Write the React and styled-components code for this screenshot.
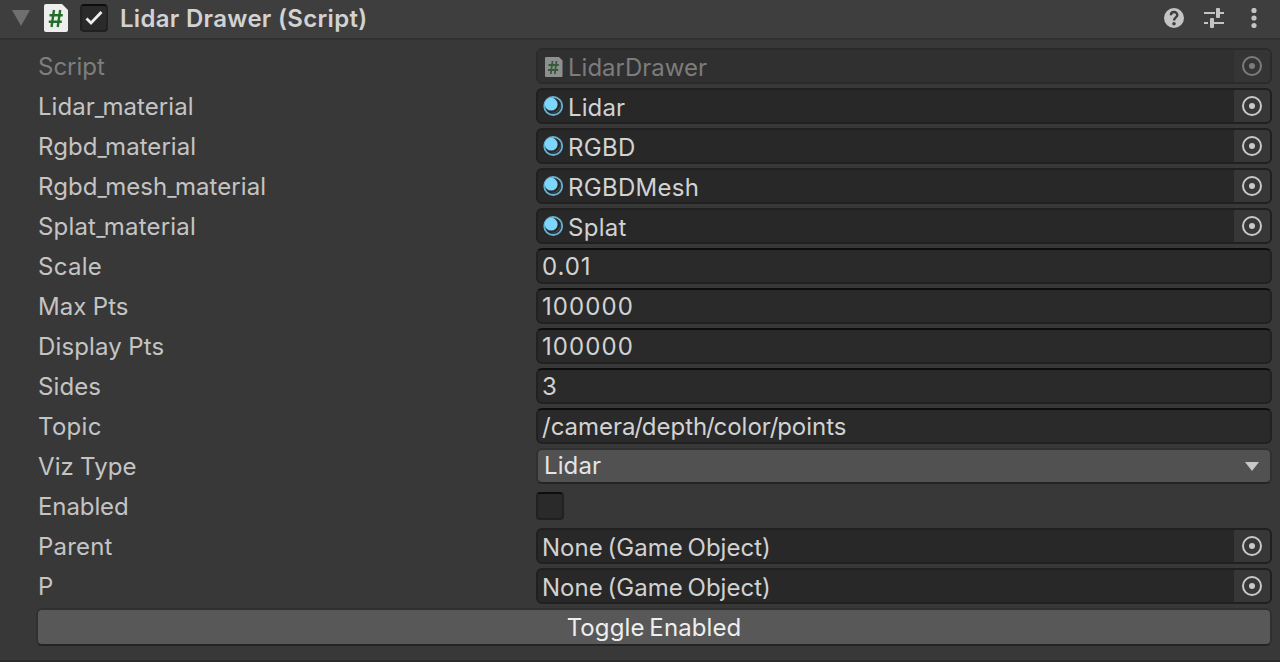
import React from "react";
import styled, { createGlobalStyle, css } from "styled-components";

const GlobalStyle = createGlobalStyle`
  *, *::before, *::after { box-sizing: border-box; }
  body {
    margin: 0;
    background: #383838;
    font-family: Inter, "Liberation Sans", sans-serif;
    font-size: 24px;
    line-height: 36px;
    color: #d2d2d2;
  }
  svg { display: block; flex: none; }
`;

const Inspector = styled.main`
  width: 1280px;
  height: 662px;
  overflow: hidden;
  background: #383838;
  border-bottom: 2px solid #30292c;
`;

const Header = styled.header`
  display: flex;
  align-items: center;
  height: 40px;
  padding: 0 16px 2px 12px;
  background: #3e3e3e;
  border-bottom: 2px solid #303030;
`;

const Title = styled.h1`
  flex: 1;
  margin: 0 0 0 12px;
  padding-top: 2px;
  font-size: 24px;
  font-weight: 600;
  line-height: 34px;
  letter-spacing: 0.3px;
  white-space: nowrap;
`;

const HeaderActions = styled.div`
  display: flex;
  align-items: center;
  gap: 20px;
`;

const Foldout = styled.span`
  display: flex;
  width: 32px;
`;

const Checkbox = styled.span`
  display: flex;
  align-items: center;
  justify-content: center;
  width: 28px;
  height: 28px;
  margin: ${(p) => p.$margin || "0"};
  background: #2a2a2a;
  border: 2px solid #212121;
  border-top-color: #0d0d0d;
  border-radius: 4px;
`;

const Body = styled.section`
  display: flex;
  flex-direction: column;
  gap: 4px;
  padding: 8px 8px 0 38px;
`;

const Row = styled.div`
  display: grid;
  grid-template-columns: 498px 736px;
  grid-template-rows: 36px;
  align-items: center;
  height: 36px;
`;

const Label = styled.span`
  padding-top: 2px;
  line-height: 34px;
  color: ${(p) => (p.$disabled ? "#7e7e7e" : "#c4c4c4")};
  letter-spacing: ${(p) => p.$spacing ?? 0.1}px;
  word-spacing: -0.7px;
  white-space: nowrap;
`;

const Underscore = styled.span`
  font-size: 20px;
  font-weight: 500;
  line-height: 1;
  letter-spacing: -1.6px;
  vertical-align: -0.5px;
`;

const Slash = styled.span`
  margin: 0 -1.1px;
`;

const fieldBox = css`
  display: flex;
  height: 36px;
  border: 2px solid #212121;
  border-radius: 6px;
  overflow: hidden;
`;

const ObjectBox = styled.div`
  ${fieldBox}
  background: ${(p) => (p.$disabled ? "#303030" : "#282828")};
  border-color: ${(p) => (p.$disabled ? "#2b2b2b" : "#202020")};
  color: ${(p) => (p.$disabled ? "#7c7c7c" : "#d2d2d2")};
`;

const ObjectValue = styled.div`
  display: flex;
  flex: 1;
  align-items: center;
  padding-left: 4px;
`;

const ObjectIcon = styled.span`
  width: 22px;
  margin-right: 4px;
`;

const FieldText = styled.span`
  padding-top: ${(p) => p.$drop || 0}px;
  letter-spacing: ${(p) => p.$spacing ?? 0.1}px;
  word-spacing: -2px;
  white-space: nowrap;
`;

const Picker = styled.span`
  display: flex;
  align-items: center;
  justify-content: center;
  width: 36px;
  background: ${(p) => (p.$disabled ? "#353535" : "#373737")};
  color: ${(p) => (p.$disabled ? "#7c7c7c" : "#c8c8c8")};
`;

const TextBox = styled.div`
  ${fieldBox}
  align-items: center;
  padding-left: 4px;
  background: #2a2a2a;
  border-top-color: #0d0d0d;
`;

const Dropdown = styled.div`
  ${fieldBox}
  align-items: center;
  justify-content: space-between;
  padding: 0 10px 0 6px;
  background: #515151;
  border-color: #303030;
  border-bottom-color: #242424;
  color: #e4e4e4;
`;

const Button = styled.button`
  height: 38px;
  margin-left: -2px;
  padding: 2px 0 0;
  background: #585858;
  border: 2px solid #303030;
  border-bottom-color: #242424;
  border-radius: 6px;
  color: #eeeeee;
  font: inherit;
  line-height: 32px;
  letter-spacing: 0.1px;
  word-spacing: -2px;
`;

const FoldoutArrow = () => (
  <svg width="18" height="16" viewBox="0 0 18 16">
    <path d="M0 0H18L9 16Z" fill="#6f6f6f" />
  </svg>
);

const ScriptIcon = () => (
  <svg width="24" height="28" viewBox="0 0 24 28">
    <path d="M2 0H18L24 6V26a2 2 0 0 1-2 2H2a2 2 0 0 1-2-2V2a2 2 0 0 1 2-2Z" fill="#eeeeee" />
    <path d="M10 6 7.500 23M16.200 6l-2.500 17M5.500 11.200H18.800M4.800 17.800H17.800" stroke="#227028" strokeWidth="2.400" fill="none" />
  </svg>
);

const SmallScriptIcon = () => (
  <svg width="22" height="22" viewBox="0 0 22 22">
    <path d="M4 2H17L20.500 5.500V21a1 1 0 0 1-1 1H4a1 1 0 0 1-1-1V3a1 1 0 0 1 1-1Z" fill="#8f8f8f" />
    <path d="M10.500 6 8.800 19M14.500 6 12.800 19M6.500 10H16.800M6 15H16.200" stroke="#355c39" strokeWidth="1.800" fill="none" />
  </svg>
);

const MaterialIcon = () => (
  <svg width="22" height="22" viewBox="0 0 22 22">
    <circle cx="11.200" cy="11" r="9" fill="#282828" stroke="#68b0d0" strokeWidth="1.800" />
    <path d="M17.500 5.500a9 9 0 0 1-12 11.500A8.500 8.500 0 0 0 17.500 5.500Z" fill="#365461" />
    <circle cx="9.200" cy="9.200" r="6.400" fill="#7fd6fd" />
  </svg>
);

const CheckMark = () => (
  <svg width="18" height="16" viewBox="0 0 18 16">
    <path d="M1.500 8.500 6 13 16.500 2" fill="none" stroke="#eeeeee" strokeWidth="2.800" />
  </svg>
);

const TargetIcon = () => (
  <svg width="20" height="20" viewBox="0 0 20 20">
    <circle cx="10" cy="10" r="9" fill="none" stroke="currentColor" strokeWidth="2" />
    <circle cx="10" cy="10" r="3" fill="currentColor" />
  </svg>
);

const HelpIcon = () => (
  <svg width="20" height="20" viewBox="0 0 20 20">
    <circle cx="10" cy="10" r="10" fill="#c4c4c4" />
    <path d="M6.800 7.200C7 3 13.300 3 13.300 7.100 13.300 9.500 10 9.300 10 12.600" fill="none" stroke="#3e3e3e" strokeWidth="2.400" />
    <circle cx="10" cy="15.700" r="1.800" fill="#3e3e3e" />
  </svg>
);

const PresetIcon = () => (
  <svg width="20" height="20" viewBox="0 0 20 20" fill="#c4c4c4">
    <rect x="0" y="4" width="11" height="2" />
    <rect x="12" y="0" width="4" height="10" rx="1" />
    <rect x="16" y="4" width="4" height="2" />
    <rect x="0" y="14" width="4" height="2" />
    <rect x="6" y="10" width="4" height="10" rx="1" />
    <rect x="10" y="14" width="10" height="2" />
  </svg>
);

const MenuIcon = () => (
  <svg width="20" height="20" viewBox="0 0 20 20" fill="#c4c4c4">
    <circle cx="10" cy="2.500" r="2.600" />
    <circle cx="10" cy="10" r="2.600" />
    <circle cx="10" cy="17.500" r="2.600" />
  </svg>
);

const DropdownArrow = () => (
  <svg width="16" height="9" viewBox="0 0 16 9">
    <path d="M1 0H15L8 9Z" fill="#c8c8c8" />
  </svg>
);

const spaced = (text) =>
  text.split(/([_/])/).map((part, i) => {
    if (part === "_") return <Underscore key={i}>_</Underscore>;
    if (part === "/") return i === 1 ? "/" : <Slash key={i}>/</Slash>;
    return part;
  });

const ObjectField = ({ value, icon, disabled, spacing }) => (
  <ObjectBox $disabled={disabled}>
    <ObjectValue>
      {icon && <ObjectIcon>{icon}</ObjectIcon>}
      <FieldText $drop={4} $spacing={spacing}>{value}</FieldText>
    </ObjectValue>
    <Picker $disabled={disabled}>
      <TargetIcon />
    </Picker>
  </ObjectBox>
);

const TextField = ({ value, spacing }) => (
  <TextBox>
    <FieldText $drop={2} $spacing={spacing}>{spaced(value)}</FieldText>
  </TextBox>
);

const properties = [
  { label: "Script", spacing: 0, field: <ObjectField value="LidarDrawer" spacing={0} icon={<SmallScriptIcon />} disabled />, disabled: true },
  { label: "Lidar_material", spacing: 0.05, field: <ObjectField value="Lidar" icon={<MaterialIcon />} /> },
  { label: "Rgbd_material", spacing: 0.05, field: <ObjectField value="RGBD" spacing={0.3} icon={<MaterialIcon />} /> },
  { label: "Rgbd_mesh_material", spacing: 0.07, field: <ObjectField value="RGBDMesh" spacing={0.3} icon={<MaterialIcon />} /> },
  { label: "Splat_material", spacing: 0.18, field: <ObjectField value="Splat" spacing={0.3} icon={<MaterialIcon />} /> },
  { label: "Scale", spacing: 0.3, field: <TextField value="0.01" spacing={0.9} /> },
  { label: "Max Pts", field: <TextField value="100000" spacing={1.1} /> },
  { label: "Display Pts", spacing: 0.15, field: <TextField value="100000" spacing={1.1} /> },
  { label: "Sides", field: <TextField value="3" /> },
  { label: "Topic", spacing: 0.3, field: <TextField value="/camera/depth/color/points" spacing={-0.03} /> },
  {
    label: "Viz Type",
    field: (
      <Dropdown>
        <FieldText>Lidar</FieldText>
        <DropdownArrow />
      </Dropdown>
    ),
  },
  { label: "Enabled", spacing: -0.1, field: <Checkbox /> },
  { label: "Parent", spacing: 0.2, field: <ObjectField value="None (Game Object)" spacing={0.02} /> },
  { label: "P", field: <ObjectField value="None (Game Object)" spacing={0.02} /> },
];

export default function App() {
  return (
    <Inspector>
      <GlobalStyle />
      <Header>
        <Foldout>
          <FoldoutArrow />
        </Foldout>
        <ScriptIcon />
        <Checkbox $margin="0 0 0 12px">
          <CheckMark />
        </Checkbox>
        <Title>Lidar Drawer (Script)</Title>
        <HeaderActions>
          <HelpIcon />
          <PresetIcon />
          <MenuIcon />
        </HeaderActions>
      </Header>
      <Body>
        {properties.map((p) => (
          <Row key={p.label}>
            <Label $disabled={p.disabled} $spacing={p.spacing}>{spaced(p.label)}</Label>
            {p.field}
          </Row>
        ))}
        <Button>Toggle Enabled</Button>
      </Body>
    </Inspector>
  );
}
